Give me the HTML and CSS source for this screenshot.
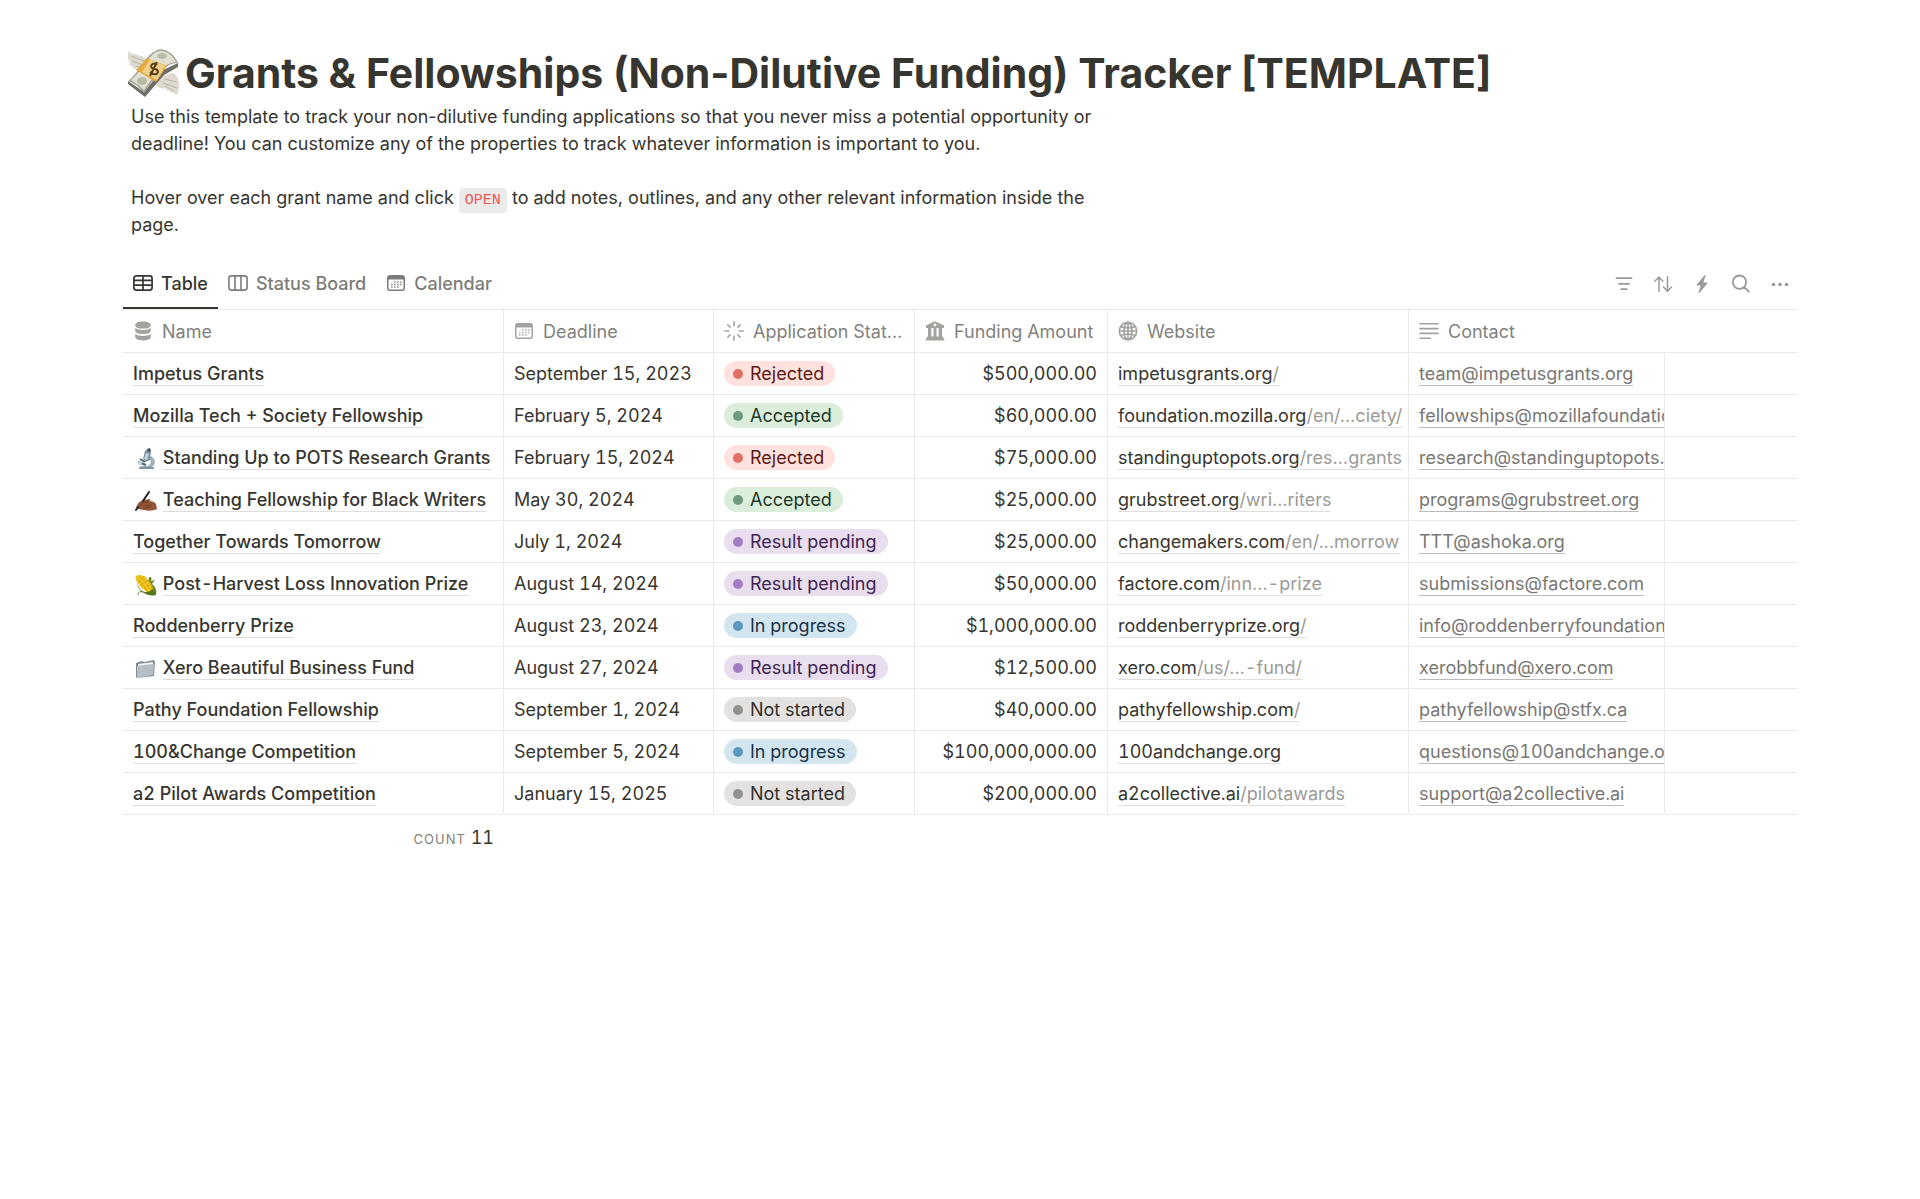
FILE: index.html
```
<!DOCTYPE html>
<html lang="en">

<head>
  <meta charset="UTF-8">
  <title>Grants &amp; Fellowships Tracker</title>
  <link rel="stylesheet" href="styles.css">
</head>

<body>
  <!-- shared icons -->
  <svg class="sprite" aria-hidden="true">
    <symbol id="i-table" viewBox="0 0 20 20">
      <g fill="none" stroke="currentColor" stroke-width="1.700"><rect x=".9" y="2.900" width="18.200" height="14.200" rx="2.500"/><path d="M10 3v14M1 7.400h18M1 12.200h18"/></g>
    </symbol>
    <symbol id="i-board" viewBox="0 0 20 20">
      <g fill="none" stroke="currentColor" stroke-width="1.600"><rect x=".9" y="2.900" width="18.200" height="14.200" rx="2.500"/><path d="M7 3v14M13 3v14"/></g>
    </symbol>
    <symbol id="i-calendar" viewBox="0 0 20 20">
      <path d="M4 2h12a3 3 0 0 1 3 3v10a3 3 0 0 1-3 3H4a3 3 0 0 1-3-3V5a3 3 0 0 1 3-3zM2.500 6.500V15c0 .9.600 1.500 1.500 1.500h12c.9 0 1.500-.6 1.500-1.500V6.500z" fill="currentColor" fill-rule="evenodd"/>
      <path d="M8.200 9h8M5.200 11.500h11M5.200 14h8" fill="none" stroke="currentColor" stroke-width="1.300" stroke-dasharray="1.300 1.700"/>
    </symbol>
    <symbol id="i-database" viewBox="0 0 20 20">
      <path d="M10 .6c4.600 0 7.800 1.500 7.800 3.600S14.600 7.600 10 7.600 2.200 6.300 2.200 4.200 5.400.6 10 .6zM2.200 7c1.500 1.300 4.300 2 7.800 2s6.300-.7 7.800-2v2.700c0 2-3.300 3.300-7.800 3.300s-7.800-1.300-7.800-3.300zM2.200 13c1.500 1.200 4.300 1.900 7.800 1.900s6.300-.7 7.800-1.900v3c0 2-3.300 3.400-7.800 3.400S2.200 18 2.200 16z" fill="currentColor"/>
    </symbol>
    <symbol id="i-status" viewBox="0 0 20 20">
      <path d="M10 .8v4M10 15.200v4M.8 10h4M15.200 10h4M3.800 3.800l2.300 2.300M13.900 13.900l2.300 2.300M3.800 16.200l2.300-2.300M13.900 6.100l2.300-2.300" fill="none" stroke="currentColor" stroke-width="1.600" stroke-linecap="round"/>
    </symbol>
    <symbol id="i-bank" viewBox="0 0 20 20">
      <path d="M10 .3 19 4.600v2.400H1V4.600zM3 7h3.300v9H3zM8.500 7h3v9h-3zM13.700 7H17v9h-3.300zM2 15.500h16v1.500l1.200.5v2H.8v-2L2 17z" fill="currentColor"/><circle cx="10" cy="4" r="1.400" fill="#fff"/>
    </symbol>
    <symbol id="i-globe" viewBox="0 0 20 20">
      <g fill="none" stroke="currentColor" stroke-width="1.700"><circle cx="10" cy="10" r="8.700"/><ellipse cx="10" cy="10" rx="4" ry="8.700"/><path d="M10 1v18M1.500 10h17M2.700 5.500c4 2 10.600 2 14.600 0M2.700 14.500c4-2 10.600-2 14.600 0"/></g>
    </symbol>
    <symbol id="i-text" viewBox="0 0 20 20">
      <path d="M1 2.800h18M1 7.600h18M1 12.400h18M1 17.200h10.500" fill="none" stroke="currentColor" stroke-width="1.600" stroke-linecap="round"/>
    </symbol>
  </svg>

  <main class="page">
    <header class="intro">
      <h1>
        <svg class="title-emoji" viewBox="0 0 54 50" aria-hidden="true">
          <path d="M1 3c4 4 9 3 13 5 3 1 5 2 7 4l-5 11c-4 1-5-1-7-2-2 1-3-1-4-3-3 0-2-3-2-5-3-1-2-4-2-10z" fill="#dedacf"/>
          <path d="M4 8l13 5M5 13l11 4M9 18l6 2" stroke="#b9b4a8" fill="none"/>
          <path d="M34 28c4 0 7-3 12-3 3 1 5 4 6 9 1 4 0 8-2 13-2-1-3-1-4-3-2 1-3 0-4-2-2 1-3 0-3-2-3 1-7 0-10-2z" fill="#dedacf"/>
          <path d="M37 31l13 3M36 35l14 5M38 38l9 5" stroke="#b9b4a8" fill="none"/>
          <path d="M1 33l16 11 17-21 17-8v4L37 27 18 49 1 36z" fill="#706e68"/>
          <path d="M1 33C10 27 18 8 28 3c5-3 10-2 14 1 4 2 7 6 9 11-12 0-20 10-34 30C12 39 7 35 1 33z" fill="#aaa99c"/>
          <path d="M4 32C13 26 20 9 29 4c4-2 8-1 12 1 3 2 6 5 8 9-11 1-19 9-32 28-4-4-8-7-13-10z" fill="#e1e0d1"/>
          <ellipse cx="35" cy="8" rx="5" ry="3" fill="#b8bba8"/><ellipse cx="15" cy="33" rx="5" ry="4" fill="#b8bba8"/>
          <path d="M20 10l20 8-11 16-20-12z" fill="#e6aa3d"/><path d="M23 11l15 7-8 14-15-8z" fill="#f1d18a"/>
          <path d="M30 17c-3-3-8 0-5 3 2 2 6 0 6 4-1 4-6 2-8 0M30 14l-7 14" fill="none" stroke="#5b431d" stroke-width="2"/>
        </svg>
        <span>Grants &amp; Fellowships (Non-Dilutive Funding) Tracker [TEMPLATE]</span>
      </h1>
      <div class="description">
        <p>Use this template to track your non-dilutive funding applications so that you never miss a potential opportunity or deadline! You can customize any of the properties to track whatever information is important to you.</p>
        <p>Hover over each grant name and click <code>OPEN</code> to add notes, outlines, and any other relevant information inside the page.</p>
      </div>
    </header>

    <div class="view-bar">
      <nav class="tabs">
        <button class="tab active"><svg class="icon"><use href="#i-table"/></svg>Table</button>
        <button class="tab"><svg class="icon"><use href="#i-board"/></svg>Status Board</button>
        <button class="tab"><svg class="icon"><use href="#i-calendar"/></svg>Calendar</button>
      </nav>
      <div class="tools">
        <button aria-label="Filter"><svg class="icon" viewBox="0 0 20 20"><path d="M2.500 4.200h15M5 9.800h10M7.300 15.200h5.400" fill="none" stroke="currentColor" stroke-width="1.800" stroke-linecap="round"/></svg></button>
        <button aria-label="Sort"><svg class="icon" viewBox="0 0 20 20"><path d="M6 17.500V3M1.800 7.200 6 3l3.800 4.200M14.500 2.800v14.200M10.500 13l4 4.200 4-4.200" fill="none" stroke="currentColor" stroke-width="1.500" stroke-linecap="round" stroke-linejoin="round"/></svg></button>
        <button aria-label="Automations"><svg class="icon" viewBox="0 0 20 20"><path d="M12.600 1.300 4.800 10.600c-.4.500-.1 1 .5 1h3.500l-2.200 6.600c-.2.700.5 1.100 1 .5l7.700-9.300c.4-.5.100-1-.5-1h-3.500l2.300-6.600c.2-.7-.5-1.100-1-.5z" fill="currentColor"/></svg></button>
        <button aria-label="Search"><svg class="icon" viewBox="0 0 20 20"><path d="M15.200 8.200a6.700 6.700 0 1 1-13.400 0 6.700 6.700 0 0 1 13.400 0zM13.300 13l4.500 4.700" fill="none" stroke="currentColor" stroke-width="1.800" stroke-linecap="round"/></svg></button>
        <button aria-label="More"><svg class="icon" viewBox="0 0 20 20"><g fill="currentColor"><circle cx="3.500" cy="10.500" r="1.800"/><circle cx="10" cy="10.500" r="1.800"/><circle cx="16.500" cy="10.500" r="1.800"/></g></svg></button>
      </div>
    </div>

    <table class="grants">
      <colgroup>
        <col class="col-name">
        <col class="col-deadline">
        <col class="col-status">
        <col class="col-amount">
        <col class="col-website">
        <col class="col-contact">
        <col>
      </colgroup>
      <thead>
        <tr>
          <th><div class="head"><svg class="icon"><use href="#i-database"/></svg><span>Name</span></div></th>
          <th><div class="head"><svg class="icon"><use href="#i-calendar"/></svg><span>Deadline</span></div></th>
          <th><div class="head"><svg class="icon"><use href="#i-status"/></svg><span>Application Status</span></div></th>
          <th><div class="head"><svg class="icon"><use href="#i-bank"/></svg><span>Funding Amount</span></div></th>
          <th><div class="head"><svg class="icon"><use href="#i-globe"/></svg><span>Website</span></div></th>
          <th><div class="head"><svg class="icon"><use href="#i-text"/></svg><span>Contact</span></div></th>
          <th></th>
        </tr>
      </thead>
      <tbody>
        <tr>
          <td class="name"><a href="#">Impetus Grants</a></td>
          <td>September 15, 2023</td>
          <td><span class="pill red">Rejected</span></td>
          <td class="amount">$500,000.00</td>
          <td class="website"><a href="#">impetusgrants.org<span>/</span></a></td>
          <td class="contact"><a href="#">team@impetusgrants.org</a></td>
          <td></td>
        </tr>
        <tr>
          <td class="name"><a href="#">Mozilla Tech + Society Fellowship</a></td>
          <td>February 5, 2024</td>
          <td><span class="pill green">Accepted</span></td>
          <td class="amount">$60,000.00</td>
          <td class="website"><a href="#">foundation.mozilla.org<span>/en/…ciety/</span></a></td>
          <td class="contact"><a href="#">fellowships@mozillafoundation.org</a></td>
          <td></td>
        </tr>
        <tr>
          <td class="name">
            <svg class="emoji" viewBox="0 0 22 22" aria-hidden="true"><path d="M4 21v-2l3-1h5c4-1 5-5 2-8l2-2c6 4 4 9 1 11l2 1v1z" fill="#9eb0bb"/><path d="M10 3l3-2 3 2-1 9-4 2-3-3z" fill="#7c929f"/><path d="M11 5l3 1-2 6-3-1z" fill="#c6d5dd"/><path d="M12 1l3-1 1 3-3 1z" fill="#46545e"/><path d="M3 14l8 3M5 11l5 3" stroke="#53656f" stroke-width="2"/><circle cx="5" cy="15" r="2" fill="#bed1dc"/><path d="M5 20h14" stroke="#647884"/></svg>
            <a href="#">Standing Up to POTS Research Grants</a>
          </td>
          <td>February 15, 2024</td>
          <td><span class="pill red">Rejected</span></td>
          <td class="amount">$75,000.00</td>
          <td class="website"><a href="#">standinguptopots.org<span>/res…grants</span></a></td>
          <td class="contact"><a href="#">research@standinguptopots.org</a></td>
          <td></td>
        </tr>
        <tr>
          <td class="name">
            <svg class="emoji" viewBox="0 0 22 22" aria-hidden="true"><path d="M1 19c1-5 3-8 8-9l6-1c1 1 0 2-1 2 3 0 6 1 7 3l1 5c-4 2-9 2-13 1l-6-1z" fill="#8f5535"/><path d="M5 16c2-3 4-4 8-4M10 16l7-1M9 18l6-1" fill="none" stroke="#6b3b23" stroke-width=".7"/><path d="M14 2 8 11M3 17l-2 3" fill="none" stroke="#222" stroke-width="2" stroke-linecap="round"/></svg>
            <a href="#">Teaching Fellowship for Black Writers</a>
          </td>
          <td>May 30, 2024</td>
          <td><span class="pill green">Accepted</span></td>
          <td class="amount">$25,000.00</td>
          <td class="website"><a href="#">grubstreet.org<span>/wri…riters</span></a></td>
          <td class="contact"><a href="#">programs@grubstreet.org</a></td>
          <td></td>
        </tr>
        <tr>
          <td class="name"><a href="#">Together Towards Tomorrow</a></td>
          <td>July 1, 2024</td>
          <td><span class="pill purple">Result pending</span></td>
          <td class="amount">$25,000.00</td>
          <td class="website"><a href="#">changemakers.com<span>/en/…morrow</span></a></td>
          <td class="contact"><a href="#">TTT@ashoka.org</a></td>
          <td></td>
        </tr>
        <tr>
          <td class="name">
            <svg class="emoji" viewBox="0 0 22 22" aria-hidden="true"><path d="M14 3c3 0 3 2 2 4l4-1-3 4c4 3 5 7 4 11-5 1-8-1-10-4z" fill="#6d8a26"/><path d="M1 2c3-2 8-1 12 4 4 4 6 9 4 12-3 2-8-1-12-6C2 9 0 5 1 2z" fill="#f0c51d"/><path d="M4 2c4 3 9 9 12 15M2 5c4 3 8 8 11 13M8 2c4 3 7 7 9 12M3 8l7-6M5 12l9-6M9 15l7-5" fill="none" stroke="#d3a012" stroke-width=".7"/><path d="M2 8c1 6 4 9 8 10 4 0 6-1 7-3 2 2 4 4 4 6-5 1-9 0-12-2-4-2-7-6-7-11z" fill="#58751f"/><path d="M3 21c0-3 2-4 5-3" fill="none" stroke="#7a8948"/></svg>
            <a href="#">Post-Harvest Loss Innovation Prize</a>
          </td>
          <td>August 14, 2024</td>
          <td><span class="pill purple">Result pending</span></td>
          <td class="amount">$50,000.00</td>
          <td class="website"><a href="#">factore.com<span>/inn…-prize</span></a></td>
          <td class="contact"><a href="#">submissions@factore.com</a></td>
          <td></td>
        </tr>
        <tr>
          <td class="name"><a href="#">Roddenberry Prize</a></td>
          <td>August 23, 2024</td>
          <td><span class="pill blue">In progress</span></td>
          <td class="amount">$1,000,000.00</td>
          <td class="website"><a href="#">roddenberryprize.org<span>/</span></a></td>
          <td class="contact"><a href="#">info@roddenberryfoundation.org</a></td>
          <td></td>
        </tr>
        <tr>
          <td class="name">
            <svg class="emoji" viewBox="0 0 22 22" aria-hidden="true"><path d="M1 5l6-2 2 1 10-2 1 2-1 14-17 2-1-1z" fill="#7e8a94"/><path d="M3 6l15-2v12L3 18z" fill="#eef0f1"/><path d="M2 8l16-2c1 0 1 0 1 1l-1 10-15 3c-1 0-1 0-1-1z" fill="#b5bec5"/></svg>
            <a href="#">Xero Beautiful Business Fund</a>
          </td>
          <td>August 27, 2024</td>
          <td><span class="pill purple">Result pending</span></td>
          <td class="amount">$12,500.00</td>
          <td class="website"><a href="#">xero.com<span>/us/…-fund/</span></a></td>
          <td class="contact"><a href="#">xerobbfund@xero.com</a></td>
          <td></td>
        </tr>
        <tr>
          <td class="name"><a href="#">Pathy Foundation Fellowship</a></td>
          <td>September 1, 2024</td>
          <td><span class="pill gray">Not started</span></td>
          <td class="amount">$40,000.00</td>
          <td class="website"><a href="#">pathyfellowship.com<span>/</span></a></td>
          <td class="contact"><a href="#">pathyfellowship@stfx.ca</a></td>
          <td></td>
        </tr>
        <tr>
          <td class="name"><a href="#">100&amp;Change Competition</a></td>
          <td>September 5, 2024</td>
          <td><span class="pill blue">In progress</span></td>
          <td class="amount">$100,000,000.00</td>
          <td class="website"><a href="#">100andchange.org</a></td>
          <td class="contact"><a href="#">questions@100andchange.org</a></td>
          <td></td>
        </tr>
        <tr>
          <td class="name"><a href="#">a2 Pilot Awards Competition</a></td>
          <td>January 15, 2025</td>
          <td><span class="pill gray">Not started</span></td>
          <td class="amount">$200,000.00</td>
          <td class="website"><a href="#">a2collective.ai<span>/pilotawards</span></a></td>
          <td class="contact"><a href="#">support@a2collective.ai</a></td>
          <td></td>
        </tr>
      </tbody>
      <tfoot>
        <tr>
          <td class="count"><span>Count</span> 11</td>
          <td colspan="6"></td>
        </tr>
      </tfoot>
    </table>
  </main>
</body>

</html>
```
FILE: styles.css
```
* {
  box-sizing: border-box;
}

body {
  margin: 0;
  background-color: #fff;
  color: #37352f;
  font-family: Inter, "Liberation Sans", sans-serif;
  font-size: 18px;
  line-height: 27px;
}

.sprite {
  display: none;
}

.page {
  padding: 48px 123px;
}

.icon {
  width: 20px;
  height: 20px;
  flex: none;
}

/* title and description */

h1 {
  display: flex;
  align-items: center;
  gap: 4px;
  margin: 0;
  padding-left: 4px;
  font-size: 41px;
  font-weight: 700;
  line-height: 50px;
}

.title-emoji {
  width: 54px;
  height: 50px;
  flex: none;
}

.description {
  max-width: 980px;
  padding: 5px 8px 21px;
}

.description p {
  margin: 0;
}

.description p + p {
  margin-top: 27px;
}

code {
  padding: 4px 6px;
  border-radius: 4px;
  background-color: #ebebea;
  color: #eb5757;
  font-family: "Liberation Mono", monospace;
  font-size: 15px;
  line-height: 20px;
}

/* tabs and tools */

.view-bar {
  display: flex;
  align-items: center;
  justify-content: space-between;
}

.tabs {
  display: flex;
}

.tab {
  display: flex;
  align-items: center;
  gap: 8px;
  height: 50px;
  padding: 0 10px;
  border: none;
  border-bottom: 2px solid transparent;
  background: none;
  color: #7d7c78;
  font: inherit;
  font-weight: 500;
  cursor: pointer;
}

.tab.active {
  border-bottom-color: #37352f;
  color: #37352f;
}

.tools {
  display: flex;
  gap: 5px;
}

.tools button {
  display: flex;
  align-items: center;
  justify-content: center;
  width: 34px;
  height: 34px;
  padding: 0;
  border: none;
  background: none;
  color: #9b9a97;
  cursor: pointer;
}

/* table */

.grants {
  width: 100%;
  border-top: 1px solid #e9e9e7;
  border-spacing: 0;
  table-layout: fixed;
  font-feature-settings: "lnum", "tnum";
}

.col-name {
  width: 381px;
}

.col-deadline {
  width: 210px;
}

.col-status {
  width: 201px;
}

.col-amount {
  width: 193px;
}

.col-website {
  width: 301px;
}

.col-contact {
  width: 256px;
}

.grants th,
.grants td {
  height: 42px;
  padding: 0 10px;
  border-right: 1px solid #e9e9e7;
  border-bottom: 1px solid #e9e9e7;
  overflow: hidden;
  text-align: left;
  white-space: nowrap;
}

.grants th:nth-child(n + 6),
.grants td:last-child {
  border-right: none;
}

.grants th {
  height: 43px;
  color: #82817d;
  font-weight: 400;
}

.head {
  display: flex;
  align-items: center;
  gap: 9px;
}

.head .icon {
  color: #a3a29f;
}

.head span {
  overflow: hidden;
  text-overflow: ellipsis;
}

.grants td a {
  display: inline-block;
  border-bottom: 1px solid #dededc;
  color: inherit;
  line-height: 22px;
  text-decoration: none;
}

.name {
  font-weight: 500;
}

.emoji {
  width: 22px;
  height: 22px;
  margin: 0 1px 0 2px;
  vertical-align: middle;
}

.grants .amount {
  text-align: right;
}

.grants .website {
  padding-right: 6px;
}

.website span {
  color: #9b9a97;
}

.grants .contact {
  padding-right: 0;
  color: #787774;
}

.grants .contact a {
  border-bottom-color: #bcbbb9;
}

.pill {
  display: flex;
  align-items: center;
  gap: 7px;
  width: fit-content;
  height: 25px;
  padding: 0 11px 0 9px;
  border-radius: 13px;
}

.pill::before {
  content: "";
  width: 10px;
  height: 10px;
  border-radius: 50%;
}

.red {
  background-color: #ffe2dd;
  color: #5d1715;
}

.red::before {
  background-color: #e16f64;
}

.green {
  background-color: #dbeddb;
  color: #1c3829;
}

.green::before {
  background-color: #6c9b7d;
}

.purple {
  background-color: #e8deee;
  color: #412454;
}

.purple::before {
  background-color: #a27cc4;
}

.blue {
  background-color: #d3e5ef;
  color: #183347;
}

.blue::before {
  background-color: #5b97bd;
}

.gray {
  background-color: #e3e2e0;
  color: #32302c;
}

.gray::before {
  background-color: #91918e;
}

.grants tfoot td {
  height: 47px;
  border: none;
}

.grants .count {
  text-align: right;
}

.count span {
  color: #82817d;
  font-size: 13px;
  letter-spacing: 1px;
  text-transform: uppercase;
}
```
